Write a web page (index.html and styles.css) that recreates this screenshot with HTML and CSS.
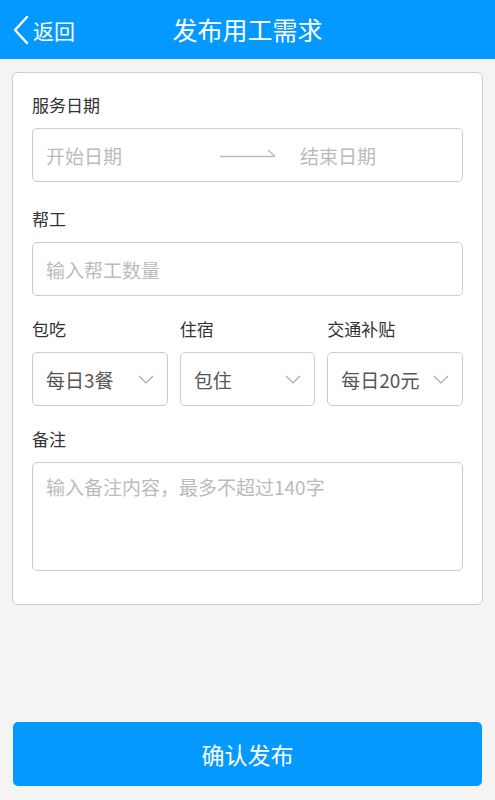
FILE: index.html
```html
<!DOCTYPE html>
<html lang="zh-CN">
  <head>
    <meta charset="UTF-8" />
    <meta name="viewport" content="width=device-width, initial-scale=1.0" />
    <title>发布用工需求</title>
    <link rel="stylesheet" href="styles.css">
  </head>
  <body>
    <!-- Top bar -->
    <header class="top-bar">
      <a class="back" href="#">
        <svg class="back-icon" width="18" height="30" viewBox="0 0 18 30">
          <polyline points="15,2 3,15 15,28" fill="none" stroke="#ffffff" stroke-width="2.4" stroke-linecap="round" stroke-linejoin="round" />
        </svg>
        返回
      </a>
      <h1 class="title">发布用工需求</h1>
    </header>

    <main class="card">
      <div class="field date-field">
        <div class="label">服务日期</div>
        <div class="box date-box">
          <span class="placeholder date-start">开始日期</span>
          <svg class="date-arrow" width="56" height="10" viewBox="0 0 56 10">
            <line x1="0" y1="8.5" x2="55" y2="8.5" stroke="#bbbbbb" stroke-width="1.3" />
            <line x1="48" y1="2" x2="55" y2="8.5" stroke="#bbbbbb" stroke-width="1.3" />
          </svg>
          <span class="placeholder date-end">结束日期</span>
        </div>
      </div>

      <div class="field">
        <div class="label">帮工</div>
        <div class="box">
          <span class="placeholder">输入帮工数量</span>
        </div>
      </div>

      <div class="field-row">
        <div class="field">
          <div class="label">包吃</div>
          <div class="box select-box">
            <span class="value">每日3餐</span>
            <svg class="chevron" width="16" height="9" viewBox="0 0 16 9">
              <polyline points="1,1 8,8 15,1" fill="none" stroke="#aaaaaa" stroke-width="1.2" />
            </svg>
          </div>
        </div>
        <div class="field">
          <div class="label">住宿</div>
          <div class="box select-box">
            <span class="value">包住</span>
            <svg class="chevron" width="16" height="9" viewBox="0 0 16 9">
              <polyline points="1,1 8,8 15,1" fill="none" stroke="#aaaaaa" stroke-width="1.2" />
            </svg>
          </div>
        </div>
        <div class="field">
          <div class="label">交通补贴</div>
          <div class="box select-box">
            <span class="value">每日20元</span>
            <svg class="chevron" width="16" height="9" viewBox="0 0 16 9">
              <polyline points="1,1 8,8 15,1" fill="none" stroke="#aaaaaa" stroke-width="1.2" />
            </svg>
          </div>
        </div>
      </div>

      <div class="field">
        <div class="label">备注</div>
        <div class="box note-box">
          <span class="placeholder">输入备注内容，最多不超过140字</span>
        </div>
      </div>
    </main>

    <!-- Submit -->
    <button class="submit">确认发布</button>
  </body>
</html>
```

FILE: styles.css
```css
body {
  margin: 0;
  width: 495px;
  height: 800px;
  background-color: #f4f4f4;
  font-family: "Noto Sans CJK SC", "Liberation Sans", sans-serif;
  color: #333333;
  display: flex;
  flex-direction: column;
}
/* Top bar */
.top-bar {
  height: 59px;
  background-color: #0399fe;
  display: flex;
  align-items: center;
  position: relative;
}
.back {
  display: flex;
  align-items: center;
  color: #ffffff;
  text-decoration: none;
  font-size: 21px;
  padding-left: 12px;
}
.back-icon {
  margin-right: 3px;
}
.title {
  position: absolute;
  left: 0;
  right: 0;
  top: 0;
  line-height: 59px;
  margin: 0;
  text-align: center;
  font-size: 25px;
  font-weight: normal;
  color: #ffffff;
  pointer-events: none;
}
/* Form card */
.card {
  margin: 13px 12px 0 12px;
  background-color: #ffffff;
  border: 1px solid #cccccc;
  border-radius: 6px;
  padding: 17px 19px 33px 19px;
  display: flex;
  flex-direction: column;
  gap: 18px;
}
.field {
  display: flex;
  flex-direction: column;
  min-width: 0;
}
.date-field {
  margin-bottom: 4px;
}
.label {
  font-size: 17px;
  line-height: 24px;
  padding-top: 3px;
  margin-bottom: 11px;
  color: #333333;
}
.box {
  height: 52px;
  border: 1px solid #cccccc;
  border-radius: 5px;
  display: flex;
  align-items: center;
  padding: 0 13px;
  font-size: 19px;
}
.placeholder {
  color: #bbbbbb;
}
.date-start {
  width: 174px;
}
.date-arrow {
  margin-top: -4px;
  margin-right: 24px;
}
.field-row {
  display: grid;
  grid-template-columns: 1fr 1fr 1fr;
  gap: 12px;
}
.select-box {
  justify-content: space-between;
  padding-right: 13px;
}
.value {
  color: #555555;
  white-space: nowrap;
}
.note-box {
  height: 97px;
  align-items: flex-start;
  padding-top: 10px;
}
/* Submit button */
.submit {
  margin: auto 13px 14px 13px;
  height: 64px;
  border: none;
  border-radius: 5px;
  background-color: #0399fe;
  color: #ffffff;
  font-family: "Noto Sans CJK SC", "Liberation Sans", sans-serif;
  font-size: 23px;
  cursor: pointer;
}
```
